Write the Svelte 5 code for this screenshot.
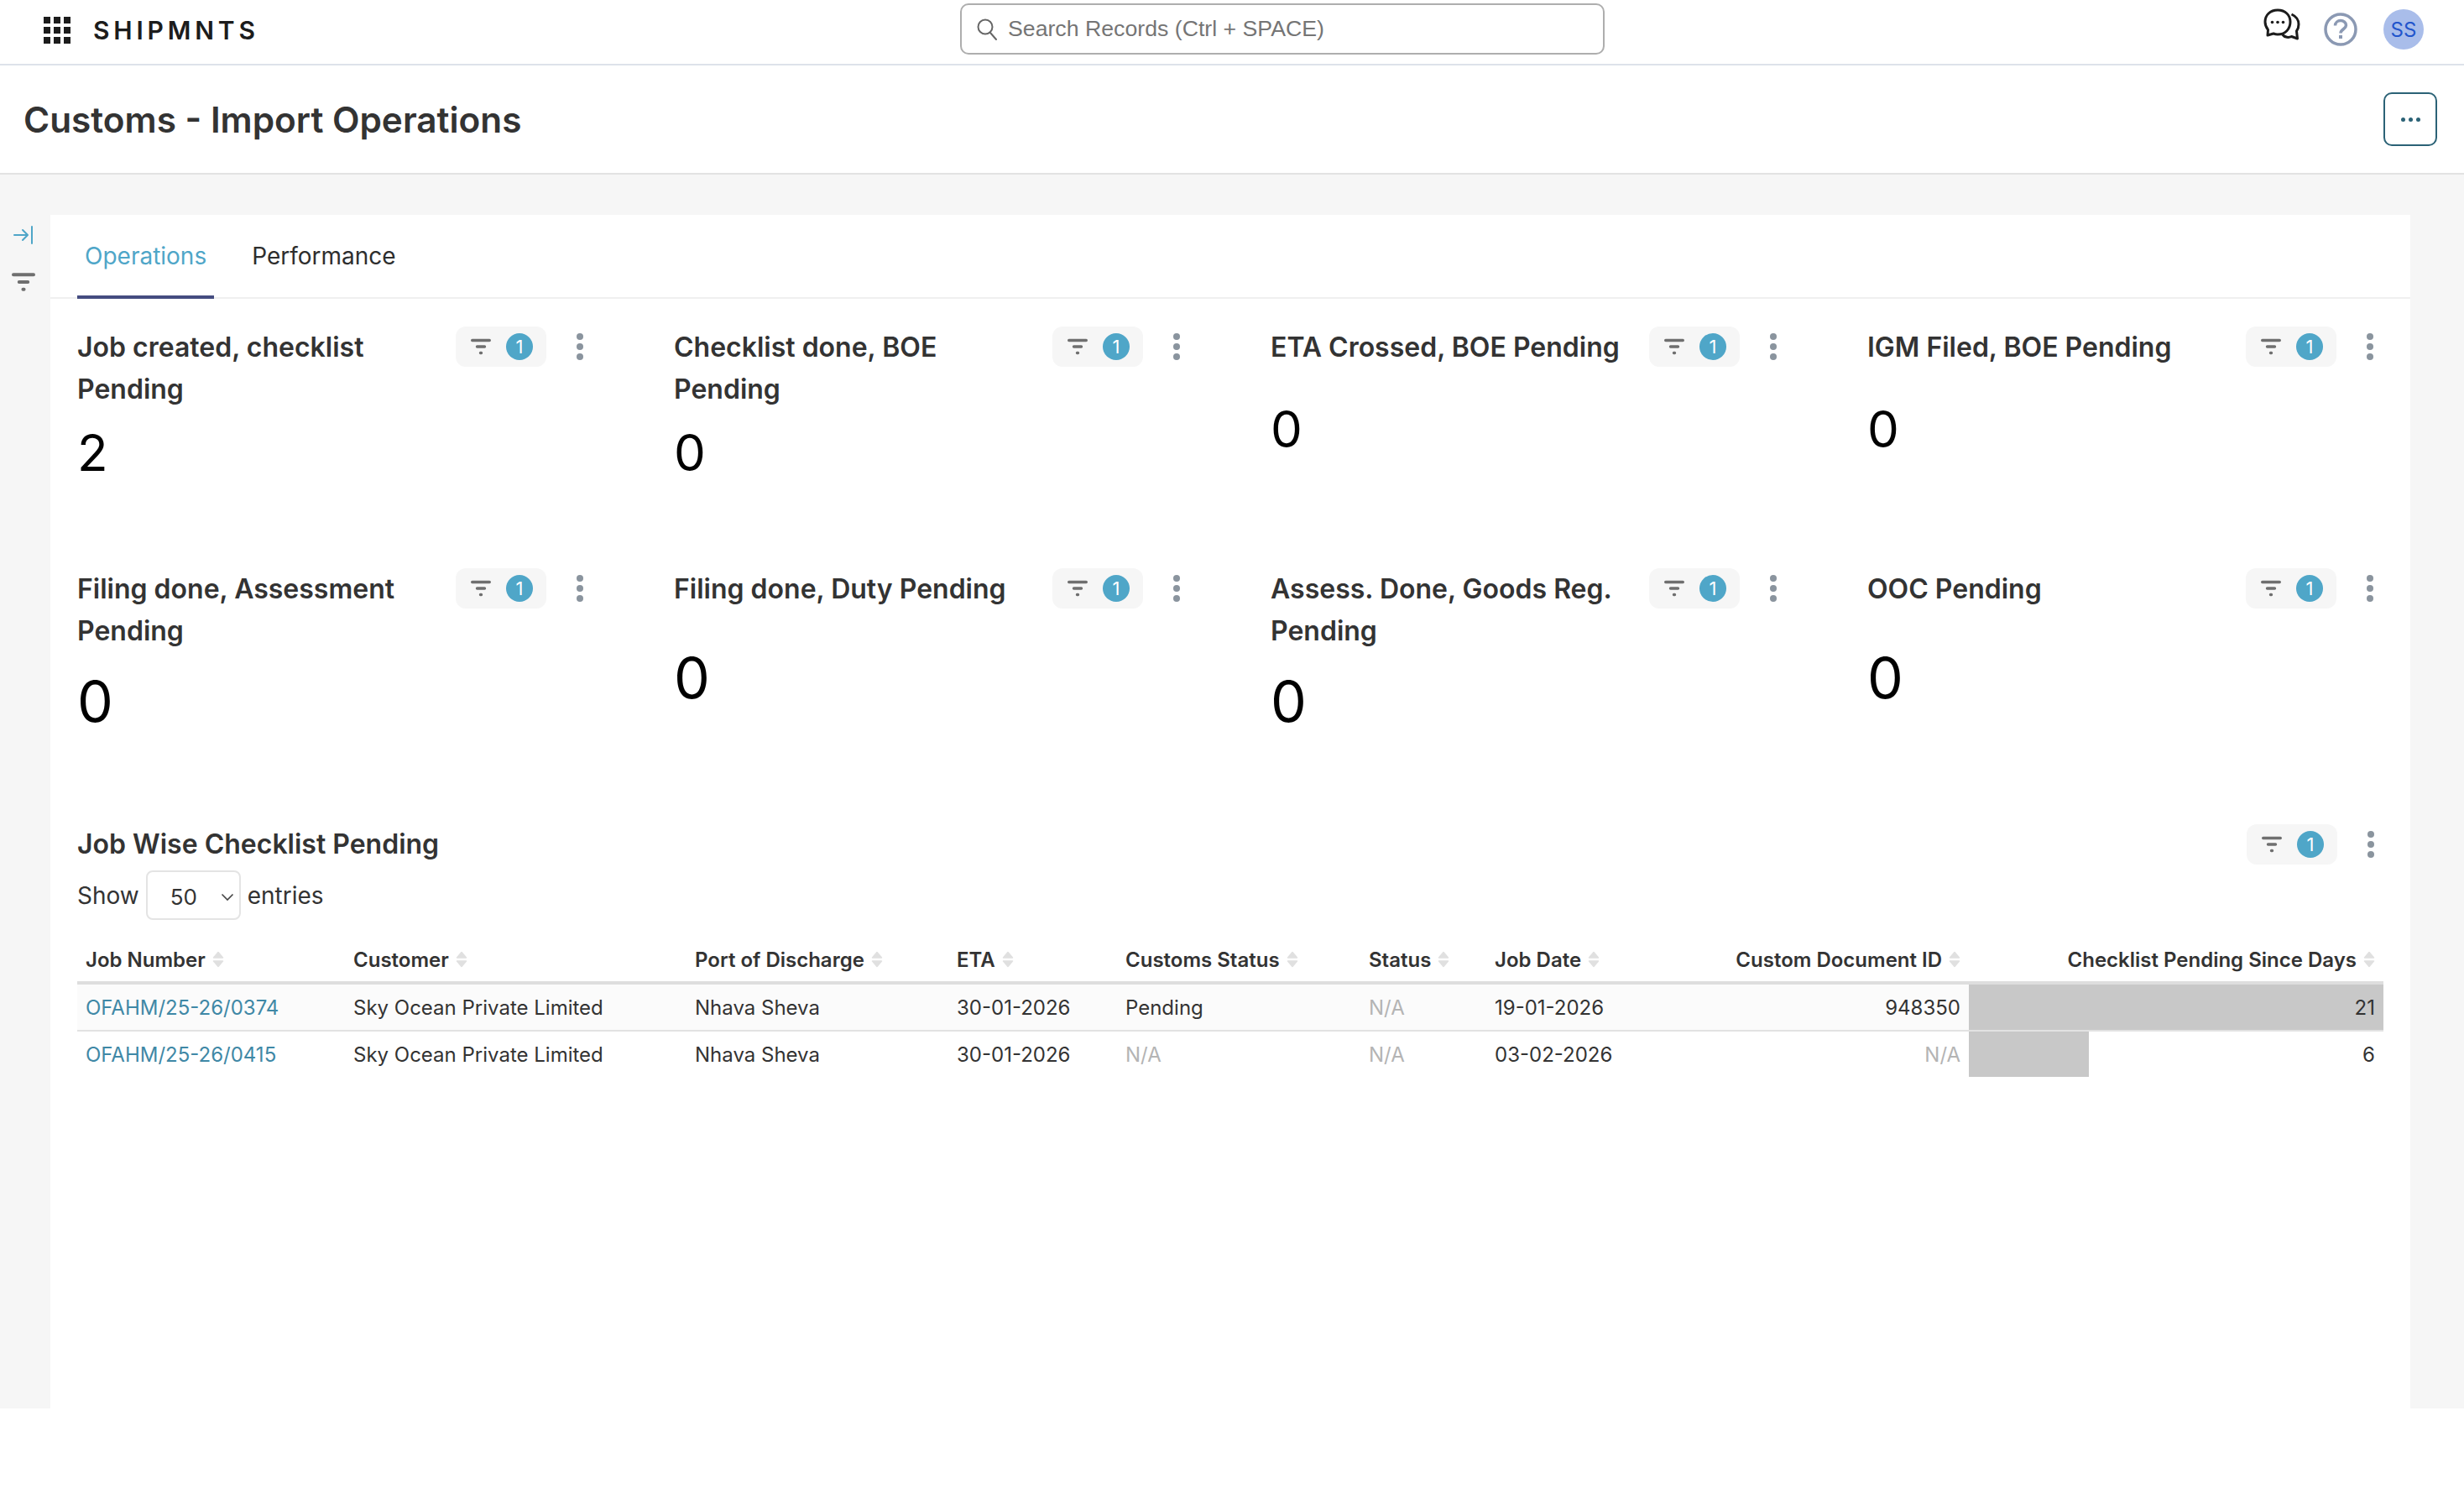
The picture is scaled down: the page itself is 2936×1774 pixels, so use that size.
<script>
    const cards = [
        { title: 'Job created, checklist Pending', value: 2 },
        { title: 'Checklist done, BOE Pending', value: 0 },
        { title: 'ETA Crossed, BOE Pending', value: 0 },
        { title: 'IGM Filed, BOE Pending', value: 0 },
        { title: 'Filing done, Assessment Pending', value: 0 },
        { title: 'Filing done, Duty Pending', value: 0 },
        { title: 'Assess. Done, Goods Reg. Pending', value: 0 },
        { title: 'OOC Pending', value: 0 }
    ];

    const columns = [
        { label: 'Job Number', width: 319 },
        { label: 'Customer', width: 407 },
        { label: 'Port of Discharge', width: 312 },
        { label: 'ETA', width: 201 },
        { label: 'Customs Status', width: 290 },
        { label: 'Status', width: 150 },
        { label: 'Job Date', width: 230 },
        { label: 'Custom Document ID', width: 345, right: true },
        { label: 'Checklist Pending Since Days', width: 494, right: true }
    ];

    const rows = [
        { job: 'OFAHM/25-26/0374', customer: 'Sky Ocean Private Limited', port: 'Nhava Sheva', eta: '30-01-2026', customs: 'Pending', status: 'N/A', date: '19-01-2026', doc: '948350', days: 21 },
        { job: 'OFAHM/25-26/0415', customer: 'Sky Ocean Private Limited', port: 'Nhava Sheva', eta: '30-01-2026', customs: 'N/A', status: 'N/A', date: '03-02-2026', doc: 'N/A', days: 6 }
    ];

    const maxDays = Math.max(...rows.map(r => r.days));
</script>

{#snippet filterIcon(size)}
    <svg width={size} height={size} viewBox="0 0 24 24" fill="none" stroke="#6f6f6f" stroke-width="3.400" stroke-linecap="round">
        <path d="M1.700 4.500h20.600M7.500 12h9M11.500 19.500h1" />
    </svg>
{/snippet}

{#snippet controls()}
    <div class="controls">
        <div class="pill">
            {@render filterIcon(24)}
            <span class="badge">1</span>
        </div>
        <div class="kebab"><i></i><i></i><i></i></div>
    </div>
{/snippet}

{#snippet na(value)}
    {#if value === 'N/A'}<span class="na">N/A</span>{:else}{value}{/if}
{/snippet}

<header class="topbar">
    <div class="brand">
        <div class="apps">
            {#each Array(9) as _}<i></i>{/each}
        </div>
        <span class="logo">SHIPMNTS</span>
    </div>
    <div class="search">
        <svg width="26" height="28" viewBox="0 0 26 28" fill="none" stroke="#666" stroke-width="2">
            <circle cx="11" cy="11" r="8.500" />
            <path d="M17 18l7 8" stroke-linecap="round" />
        </svg>
        <span>Search Records (Ctrl + SPACE)</span>
    </div>
    <div class="actions">
        <svg class="chat" width="44" height="42" viewBox="0 0 44 42" fill="none" stroke="#1c1c1c" stroke-width="3" stroke-linejoin="round">
            <path d="M33.500 8C39 10.500 42 14 42 20c0 3.500-1 6-2.500 8l1 9-7-2.500c-3 1.500-8 1.500-11 -2.500" />
            <path d="M32 17c0-8-6-14-15-14S2 9 2 17c0 4 1.500 7 3.500 9.500L5 33l7-2c1.500 .6 3.200 1 5 1 9 0 15-6.500 15-15z" fill="#fff" />
            <circle cx="10.500" cy="17.500" r="1.800" fill="#1c1c1c" stroke="none" />
            <circle cx="17" cy="17.500" r="1.800" fill="#1c1c1c" stroke="none" />
            <circle cx="23.500" cy="17.500" r="1.800" fill="#1c1c1c" stroke="none" />
        </svg>
        <svg class="help" width="40" height="40" viewBox="0 0 40 40" fill="none" stroke="#8b99b3" stroke-width="3.500">
            <circle cx="20" cy="20" r="18" />
            <path d="M13.500 15.500c0-3.500 3-6 6.500-6s6.500 2.500 6.500 5.500c0 4.500-6.500 5-6.500 9.500" />
            <rect x="18" y="27" width="4" height="4" fill="#8b99b3" stroke="none" />
        </svg>
        <div class="avatar">SS</div>
    </div>
</header>

<section class="titlebar">
    <h1>Customs - Import Operations</h1>
    <button class="more" aria-label="More"><i></i><i></i><i></i></button>
</section>

<main class="body">
    <aside class="rail">
        <svg width="26" height="24" viewBox="0 0 26 24" fill="none" stroke="#4fa6c8" stroke-width="2" stroke-linecap="round" stroke-linejoin="round">
            <path d="M2 12h15M12 6l6 6-6 6M23 2v20" />
        </svg>
        <div class="rail-filter">{@render filterIcon(28)}</div>
    </aside>

    <div class="panel">
        <nav class="tabs">
            <span class="tab active">Operations</span>
            <span class="tab">Performance</span>
        </nav>

        <div class="cards">
            {#each cards as card, i}
                <div class="card" class:lower={i > 3}>
                    <div class="card-head">
                        <div class="card-title">{card.title}</div>
                        {@render controls()}
                    </div>
                    <div class="card-value">{card.value}</div>
                </div>
            {/each}
        </div>

        <div class="report">
            <div class="report-head">
                <div class="report-title">Job Wise Checklist Pending</div>
                {@render controls()}
            </div>
            <div class="length">
                Show
                <div class="select">
                    <span>50</span>
                    <svg width="16" height="10" viewBox="0 0 16 10" fill="none" stroke="#444" stroke-width="1.600">
                        <path d="M1.500 1.500L8 8l6.500-6.500" />
                    </svg>
                </div>
                entries
            </div>

            <table>
                <colgroup>
                    {#each columns as col}<col style="width: {col.width}px" />{/each}
                </colgroup>
                <thead>
                    <tr>
                        {#each columns as col}
                            <th class:right={col.right}>
                                <span class="th-inner">
                                    {col.label}
                                    <svg width="14" height="20" viewBox="0 0 14 20" fill="#e0e0e0" stroke="#e0e0e0" stroke-width="1.500" stroke-linejoin="round">
                                        <path d="M7 1.500l5.500 6.500H1.500zM7 18.500l5.500-6.500H1.500z" />
                                    </svg>
                                </span>
                            </th>
                        {/each}
                    </tr>
                </thead>
                <tbody>
                    {#each rows as row, i}
                        <tr class:odd={i === 0}>
                            <td><span class="link">{row.job}</span></td>
                            <td>{row.customer}</td>
                            <td>{row.port}</td>
                            <td>{row.eta}</td>
                            <td>{@render na(row.customs)}</td>
                            <td>{@render na(row.status)}</td>
                            <td>{row.date}</td>
                            <td class="right">{@render na(row.doc)}</td>
                            <td class="right bar-cell">
                                <div class="bar" style="width: {Math.ceil((row.days / maxDays) * 100)}%"></div>
                                <span class="bar-value">{row.days}</span>
                            </td>
                        </tr>
                    {/each}
                </tbody>
            </table>
        </div>
    </div>
</main>

<style>
    :global(body) {
        background: #fff;
        font-family: Inter, "Liberation Sans", sans-serif;
        color: #333;
    }
    .topbar {
        height: 76px;
        border-bottom: 2px solid #dde2ea;
        position: relative;
        display: flex;
        align-items: center;
        justify-content: space-between;
    }
    .brand {
        display: flex;
        align-items: center;
        gap: 27px;
        padding: 0 0 4px 52px;
    }
    .apps {
        display: grid;
        grid-template-columns: repeat(3, 8px);
        gap: 4px;
    }
    .apps i {
        height: 8px;
        background: #1c1c1c;
    }
    .logo {
        font-size: 30px;
        font-weight: 600;
        letter-spacing: 4.800px;
        color: #1c1c1c;
    }
    .search {
        position: absolute;
        left: 1144px;
        top: 4px;
        width: 768px;
        height: 61px;
        box-sizing: border-box;
        border: 2px solid #aeaeae;
        border-radius: 10px;
        display: flex;
        align-items: center;
        gap: 12px;
        padding-left: 17px;
        font-family: "Liberation Sans", Arial, sans-serif;
        font-size: 26.700px;
        color: #757575;
    }
    .actions {
        display: flex;
        align-items: center;
        padding: 0 48px 6px 0;
    }
    .chat { margin-bottom: 10px; }
    .help { margin-left: 28px; }
    .avatar {
        margin-left: 31px;
        width: 48px;
        height: 48px;
        border-radius: 50%;
        background: #a9bdea;
        color: #2255cc;
        font-size: 24px;
        display: flex;
        align-items: center;
        justify-content: center;
    }
    .titlebar {
        height: 128px;
        border-bottom: 2px solid #e2e2e2;
        display: flex;
        align-items: center;
        justify-content: space-between;
        padding: 0 32px 0 28px;
    }
    h1 {
        margin: 0;
        font-size: 42.300px;
        font-weight: 600;
        color: #333;
    }
    .more {
        width: 64px;
        height: 64px;
        background: #fff;
        border: 2px solid #2b6276;
        border-radius: 10px;
        display: flex;
        align-items: center;
        justify-content: center;
        gap: 4px;
        padding: 0;
    }
    .more i {
        width: 5px;
        height: 5px;
        border-radius: 50%;
        background: #2b6276;
    }
    .body {
        height: 1470px;
        box-sizing: border-box;
        background: #f6f6f6;
        display: flex;
        padding-top: 48px;
    }
    .rail {
        width: 60px;
        flex: none;
        display: flex;
        flex-direction: column;
        align-items: center;
        padding: 12px 4px 0 0;
        gap: 30px;
        box-sizing: border-box;
    }
    .rail-filter { height: 28px; }
    .panel {
        width: 2812px;
        background: #fff;
        box-sizing: border-box;
    }
    .tabs {
        height: 100px;
        border-bottom: 2px solid #f0f0f0;
        display: flex;
        padding-left: 32px;
        box-sizing: border-box;
    }
    .tab {
        padding: 2px 9px 0 9px;
        margin-right: 36px;
        font-size: 28px;
        height: 100px;
        box-sizing: border-box;
        display: flex;
        align-items: center;
        border-bottom: 4px solid transparent;
        color: #2e2e2e;
    }
    .tab.active {
        color: #4fa6c8;
        border-bottom-color: #444c80;
    }
    .cards {
        display: grid;
        grid-template-columns: repeat(4, 603px);
        column-gap: 108px;
        padding: 33px 0 0 32px;
    }
    .card {
        height: 288px;
        box-sizing: border-box;
    }
    .card.lower { height: 304px; }
    .card-head {
        display: flex;
        justify-content: space-between;
        align-items: flex-start;
        min-height: 72px;
    }
    .card-title {
        font-size: 32px;
        font-weight: 600;
        line-height: 50px;
        color: #333;
        max-width: 430px;
    }
    .report-title {
        font-size: 32px;
        font-weight: 600;
        line-height: 50px;
        color: #333;
    }
    .card-value {
        font-size: 60px;
        line-height: 100px;
        color: #000;
        font-weight: 400;
    }
    .lower .card-value {
        font-size: 68px;
        line-height: 116px;
    }
    .controls {
        display: flex;
        align-items: center;
        gap: 36px;
        flex: none;
    }
    .pill {
        width: 108px;
        height: 48px;
        box-sizing: border-box;
        padding-left: 2px;
        border-radius: 12px;
        background: #f6f6f6;
        display: flex;
        align-items: center;
        justify-content: center;
        gap: 18px;
    }
    .badge {
        width: 32px;
        height: 32px;
        border-radius: 50%;
        background: #4fa6c8;
        color: #fff;
        font-size: 22px;
        display: flex;
        align-items: center;
        justify-content: center;
    }
    .kebab {
        display: flex;
        flex-direction: column;
        gap: 4px;
        width: 8px;
    }
    .kebab i {
        width: 8px;
        height: 8px;
        border-radius: 50%;
        background: #8a949e;
    }
    .report {
        padding: 0 31px 0 32px;
    }
    .report-head {
        display: flex;
        justify-content: space-between;
        align-items: center;
    }
    .report-head .controls { padding-right: 12px; }
    .length {
        display: flex;
        align-items: center;
        gap: 8px;
        font-size: 28px;
        margin-top: 6px;
    }
    .select {
        width: 113px;
        height: 59px;
        box-sizing: border-box;
        border: 2px solid #e4e4e4;
        border-radius: 8px;
        display: flex;
        align-items: center;
        justify-content: space-between;
        padding: 4px 6px 0 27px;
        font-size: 26px;
    }
    table {
        border-collapse: collapse;
        table-layout: fixed;
        width: 2748px;
        margin-top: 23px;
        font-size: 24px;
    }
    th {
        height: 48px;
        padding: 0 10px 2px 10px;
        text-align: left;
        font-size: 24px;
        font-weight: 600;
        border-bottom: 4px solid #dedede;
        white-space: nowrap;
    }
    .th-inner {
        display: inline-flex;
        align-items: center;
        gap: 8px;
    }
    th.right { text-align: right; }
    td {
        height: 54px;
        padding: 0 10px;
        border-bottom: 2px solid #e2e2e2;
        white-space: nowrap;
    }
    tbody tr:last-child td { border-bottom: none; }
    tr.odd { background: #fbfbfb; }
    td.right { text-align: right; }
    .link { color: #3f88a6; }
    .na { color: #b4b4b4; }
    .bar-cell {
        position: relative;
        background: #fff;
    }
    .bar {
        position: absolute;
        left: 0;
        top: 0;
        bottom: 0;
        background: #c8c8c8;
    }
    .bar-value { position: relative; }
</style>
